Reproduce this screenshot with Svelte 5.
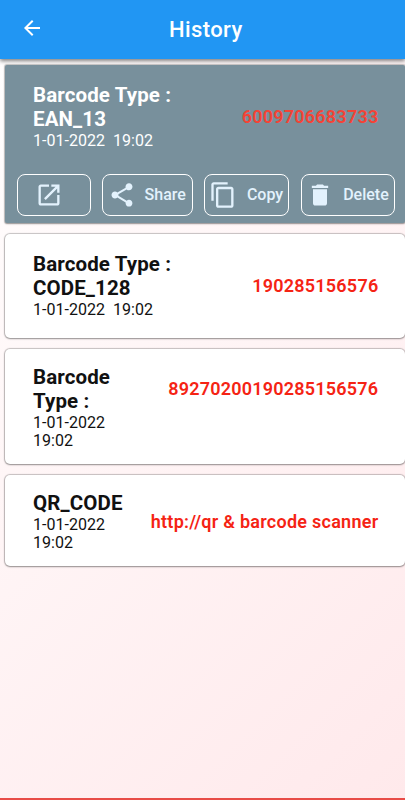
<script>
  const records = [
    { title: ['Barcode Type :', 'EAN_13'], date: ['1-01-2022\u00a0 19:02'], value: '6009706683733', height: 158, top: 18, selected: true },
    { title: ['Barcode Type :', 'CODE_128'], date: ['1-01-2022\u00a0 19:02'], value: '190285156576', height: 104, top: 18 },
    { title: ['Barcode', 'Type :'], date: ['1-01-2022', '19:02'], value: '89270200190285156576', height: 115, top: 16, raised: true },
    { title: ['QR_CODE'], date: ['1-01-2022', '19:02'], value: 'http://qr & barcode scanner', height: 91, top: 16, link: true }
  ];
</script>

<main>
  <header>
    <svg class="back" viewBox="0 0 24 24"><path d="M20 11H7.83l5.59-5.59L12 4l-8 8 8 8 1.41-1.41L7.83 13H20v-2z" /></svg>
    <h1>History</h1>
  </header>
  <section class="list">
    {#each records as r}
      <article class:selected={r.selected} style="height: {r.height}px">
        <div class="row" class:raised={r.raised} style="padding-top: {r.top}px">
          <div class="info">
            {#each r.title as line}<h2>{line}</h2>{/each}
            <div class="date">
              {#each r.date as line}<p>{line}</p>{/each}
            </div>
          </div>
          <strong class:link={r.link}>{r.value}</strong>
        </div>
        {#if r.selected}
          <div class="actions">
            <button class="open" aria-label="Open">
              <svg viewBox="0 0 24 24"><path d="M19 19H5V5h7V3H5c-1.110 0-2 .9-2 2v14c0 1.1.89 2 2 2h14c1.1 0 2-.9 2-2v-7h-2v7zM14 3v2h3.59l-9.83 9.83 1.41 1.41L19 6.41V10h2V3h-7z" /></svg>
            </button>
            <button class="share">
              <svg viewBox="0 0 24 24"><path d="M18 16.08c-.76 0-1.44.3-1.96.77L8.91 12.7c.05-.23.09-.46.09-.7s-.04-.47-.09-.7l7.05-4.11c.54.5 1.25.81 2.04.81 1.66 0 3-1.34 3-3s-1.34-3-3-3-3 1.34-3 3c0 .24.04.47.09.7L8.04 9.81C7.5 9.31 6.79 9 6 9c-1.66 0-3 1.34-3 3s1.34 3 3 3c.79 0 1.5-.31 2.04-.81l7.12 4.16c-.05.21-.08.43-.08.65 0 1.61 1.31 2.92 2.92 2.92s2.92-1.31 2.92-2.92-1.31-2.92-2.92-2.92z" /></svg>
              <span>Share</span>
            </button>
            <button class="copy">
              <svg viewBox="0 0 24 24"><path d="M16 1H4c-1.1 0-2 .9-2 2v14h2V3h12V1zm3 4H8c-1.1 0-2 .9-2 2v14c0 1.1.9 2 2 2h11c1.1 0 2-.9 2-2V7c0-1.1-.9-2-2-2zm0 16H8V7h11v14z" /></svg>
              <span>Copy</span>
            </button>
            <button class="delete">
              <svg viewBox="0 0 24 24"><path d="M6 19 C6 20.1 6.9 21 8 21 H16 C17.1 21 18 20.1 18 19 V7 H6 Z M19 4 H15.5 L14.5 3 H9.5 L8.5 4 H5 V6 H19 Z" /></svg>
              <span>Delete</span>
            </button>
          </div>
        {/if}
      </article>
    {/each}
  </section>
  <footer></footer>
</main>

<style>
  :global(body) { margin: 0; }
  main {
    width: 405px;
    height: 800px;
    overflow: hidden;
    display: flex;
    flex-direction: column;
    font-family: Roboto, sans-serif;
    background: linear-gradient(135deg, #fff 0%, #ffebed 90%, #ffe9eb 100%);
  }
  header {
    height: 59px;
    flex: none;
    box-sizing: border-box;
    display: flex;
    align-items: center;
    padding: 0 20px;
    background: #2196f3;
    color: #fff;
    box-shadow: 0 2px 4px rgba(0, 0, 0, 0.5);
  }
  .back { width: 24px; height: 24px; margin-top: -4px; fill: currentColor; }
  h1 { margin: 0 0 0 125px; font-size: 22px; line-height: 26px; font-weight: 500; letter-spacing: 0.4px; }
  .list { flex: 1; display: flex; flex-direction: column; gap: 11px; padding: 6.400px 0 0 5.400px; }
  article {
    width: 400px;
    flex: none;
    box-sizing: border-box;
    border-radius: 5px;
    background: #fff;
    color: #111;
    box-shadow: 0 0 1px 1px rgba(0, 0, 0, 0.22), 0 1px 2px rgba(0, 0, 0, 0.25);
  }
  .selected { background: #78909c; color: #fff; border-radius: 2px; }
  .row { display: flex; justify-content: space-between; align-items: center; padding: 0 27px 0 27.600px; }
  .raised { align-items: flex-start; }
  .raised strong { margin-top: 13px; }
  h2 { margin: 0; font-size: 20.500px; line-height: 24px; font-weight: 700; letter-spacing: 0.120px; white-space: nowrap; }
  .date { padding-top: 0.500px; }
  p { margin: 0; font-size: 16px; line-height: 18px; letter-spacing: 0.030px; white-space: nowrap; }
  strong { padding-top: 1px; font-size: 18px; line-height: 22px; font-weight: 600; letter-spacing: 0.220px; color: #f52314; white-space: nowrap; }
  .link { padding-top: 0; letter-spacing: 0.260px; }
  .raised strong { padding-top: 0; }
  .selected strong { color: #f44336; }
  .actions { display: flex; gap: 11.300px; margin: 24.500px 0 0 11.400px; }
  button {
    height: 42px;
    box-sizing: border-box;
    flex: none;
    display: flex;
    align-items: center;
    padding: 0;
    border: 1px solid #fff;
    border-radius: 8px;
    background: none;
    color: #e3f2fd;
    font: 500 16px/20px Roboto, sans-serif;
  }
  button svg { flex: none; fill: currentColor; }
  .open { width: 74px; }
  .open svg { width: 28px; height: 28px; margin-left: 17.500px; }
  .share { width: 91px; }
  .share svg { width: 28px; height: 28px; margin-left: 4.500px; }
  .share span { margin-left: 9px; }
  .copy { width: 85px; }
  .copy svg { width: 28px; height: 28px; margin-left: 4px; }
  .copy span { margin-left: 9.500px; }
  .delete { width: 94px; }
  .delete svg { width: 28px; height: 28px; margin-left: 4.500px; }
  .delete span { margin-left: 9px; }
  footer { height: 2px; flex: none; background: #e84c47; }
</style>
